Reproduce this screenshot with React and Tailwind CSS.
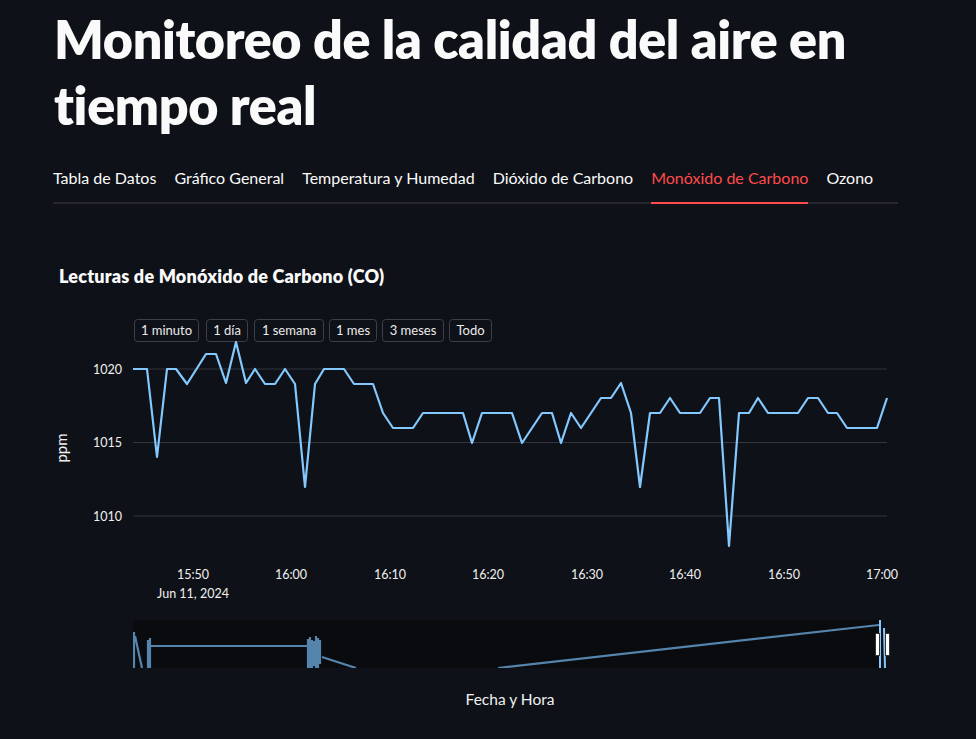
import React from "react";

const pts = "133,369 147,369 157,457 167,369 176,369 187,384 206,354 216,354 226,383 236,342 246,383 255,369 265,384 275,384 285,369 295,384 305,487 315,384 324,369 344,369 354,384 373,384 383,413 393,428 413,428 423,413 463,413 472,443 482,413 512,413 522,443 542,413 552,413 561,443 571,413 581,428 601,398 611,398 621,383 631,413 640,487 650,413 660,413 670,398 680,413 700,413 710,398 719,398 729,546 739,413 749,413 758,398 768,413 798,413 808,398 818,398 828,413 837,413 847,428 877,428 887,398";

const buttons = [
  [134, 198, "1 minuto"],
  [206, 247, "1 día"],
  [254, 323, "1 semana"],
  [329, 376, "1 mes"],
  [382, 443, "3 meses"],
  [449, 491, "Todo"],
];

const xticks = [
  [193, "15:50"],
  [291, "16:00"],
  [390, "16:10"],
  [488, "16:20"],
  [587, "16:30"],
  [685, "16:40"],
  [784, "16:50"],
  [882, "17:00"],
];

const tabs = [
  "Tabla de Datos",
  "Gráfico General",
  "Temperatura y Humedad",
  "Dióxido de Carbono",
  "Monóxido de Carbono",
  "Ozono",
];

function Chart() {
  return (
    <svg
      width="976"
      height="430"
      viewBox="0 305 976 430"
      className="block"
      style={{ fontFamily: "Lato, 'Liberation Sans', sans-serif" }}
    >
      <defs>
        <clipPath id="rs">
          <rect x="133" y="620" width="746" height="48" />
        </clipPath>
      </defs>
      {buttons.map(([a, b, t]) => (
        <g key={t}>
          <rect x={a + 0.5} y={319.5} width={b - a} height={22} rx={3} fill="#0e1117" stroke="#3d404b" />
          <text x={(a + b) / 2 + 0.5} y={335} textAnchor="middle" fontSize="13" fill="#ececec">
            {t}
          </text>
        </g>
      ))}
      {[369, 442.5, 516].map((y) => (
        <line key={y} x1="133" x2="887" y1={y} y2={y} stroke="#33353f" strokeWidth="1" />
      ))}
      {[
        [369, "1020"],
        [442.5, "1015"],
        [516, "1010"],
      ].map(([y, t]) => (
        <text key={t} x="122" y={y + 4.5} textAnchor="end" fontSize="12.5" fill="#f0f0f0">
          {t}
        </text>
      ))}
      <text x="67" y="448" fontSize="15" fill="#f0f0f0" textAnchor="middle" transform="rotate(-90 67 448)">
        ppm
      </text>
      <polyline points={pts} fill="none" stroke="#83c9ff" strokeWidth="2.2" strokeLinejoin="round" />
      {xticks.map(([x, t]) => (
        <text key={t} x={x} y="579" textAnchor="middle" fontSize="12.5" fill="#f0f0f0">
          {t}
        </text>
      ))}
      <text x="193" y="598" textAnchor="middle" fontSize="12.5" fill="#f0f0f0">
        Jun 11, 2024
      </text>
      <rect x="133" y="620" width="746" height="48" fill="#0a0b0e" />
      <g clipPath="url(#rs)" stroke="#5584ad" strokeWidth="2.2" fill="none">
        <path d="M134,632 L134,668 M135,636 L142,668 M148,640 L148,668 M150,638 L150,668" />
        <path d="M150,646 L307,646" />
        <path d="M308,639 L308,668 M310,637 L310,668 M312,640 L312,668 M314,641 L314,666 M316,636 L316,668 M318,638 L318,668 M320,640 L320,664" />
        <path d="M322,657 L356,668" />
        <path d="M498,668 L879,625" />
      </g>
      <path d="M880,620 L880,668 M884,628 L885,668" stroke="#83c9ff" strokeWidth="2" fill="none" />
      <rect x="875.5" y="633.5" width="4" height="22" fill="#ffffff" stroke="#333" strokeWidth="1" />
      <rect x="885.5" y="633.5" width="4" height="22" fill="#ffffff" stroke="#333" strokeWidth="1" />
      <text x="510" y="705" textAnchor="middle" fontSize="15.5" fill="#f0f0f0">
        Fecha y Hora
      </text>
    </svg>
  );
}

export default function App() {
  return (
    <div
      className="min-h-screen bg-[#0e1117] text-[#fafafa]"
      style={{ fontFamily: "Lato, 'Liberation Sans', sans-serif" }}
    >
      <div className="w-[845px] ml-[53px] pt-[6px]">
        <h1 className="text-[52px] font-extrabold leading-[66px] pl-[1px] tracking-[-0.35px]">
          Monitoreo de la calidad del aire en tiempo real
        </h1>
        <div className="mt-[18px] flex gap-[18px] border-b-2 border-[#262730]">
          {tabs.map((t, i) => (
            <div
              key={t}
              className={
                i === 4
                  ? "pt-[10px] pb-[12px] text-[16px] leading-[24px] text-[#ff4b4b] border-b-2 border-[#ff4b4b] -mb-[2px]"
                  : "pt-[10px] pb-[12px] text-[16px] leading-[24px] text-[#fafafa]"
              }
            >
              {t}
            </div>
          ))}
        </div>
        <div className="mt-[60px] pl-[6px] text-[18px] font-extrabold leading-[24px] tracking-[0.2px]">
          Lecturas de Monóxido de Carbono (CO)
        </div>
      </div>
      <div className="mt-[17px]">
        <Chart />
      </div>
    </div>
  );
}
